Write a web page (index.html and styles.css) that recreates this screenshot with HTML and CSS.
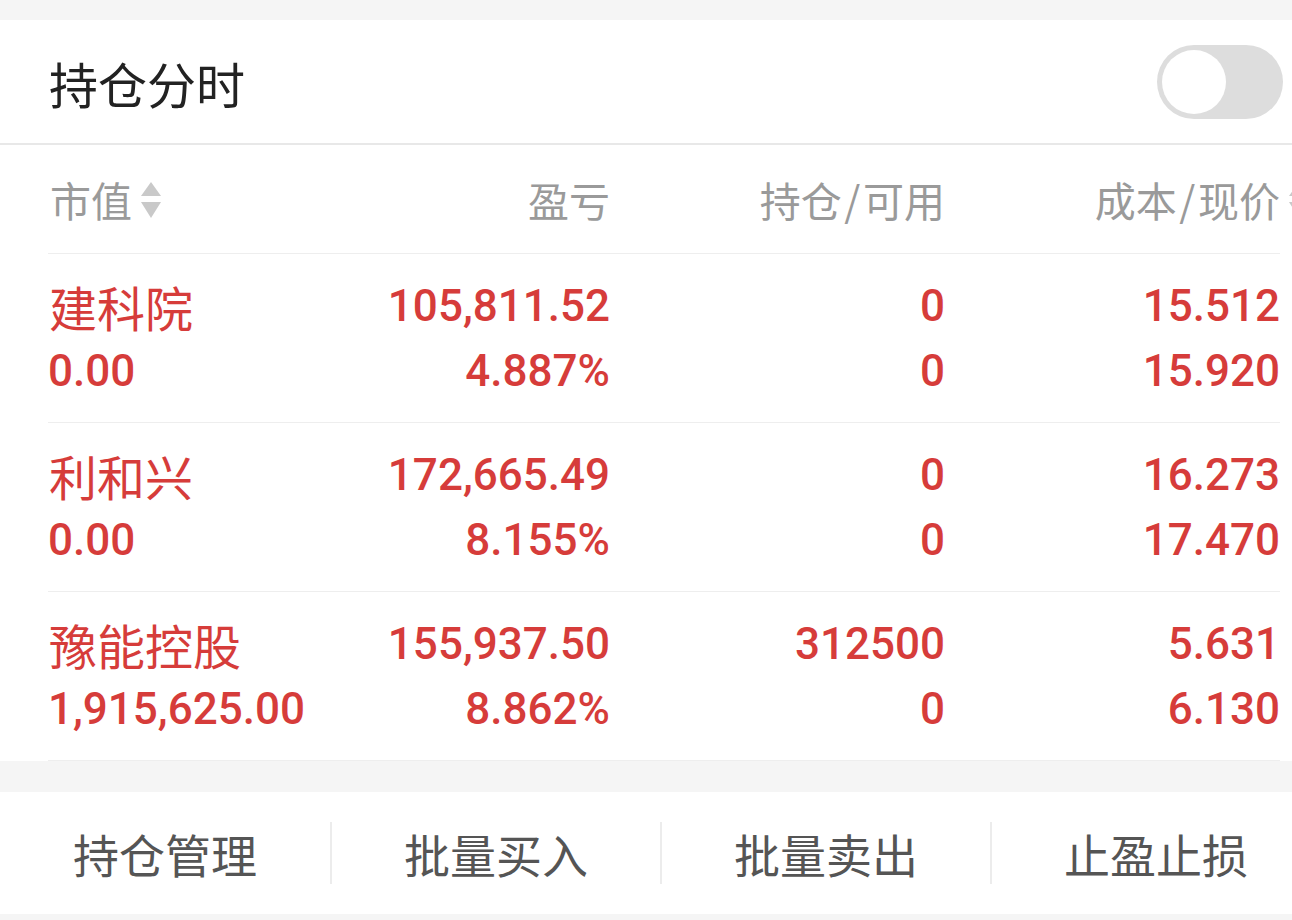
FILE: index.html
```html
<!DOCTYPE html>
<html lang="zh-CN">
<head>
    <meta charset="UTF-8">
    <meta name="viewport" content="width=device-width, initial-scale=1.0">
    <title>持仓分时</title>
    <link rel="stylesheet" href="styles.css">
</head>
<body>
    <div class="page">
        <div class="top-gap"></div>

        <div class="panel-header">
            <div class="panel-title">持仓分时</div>
            <div class="switch"><span class="knob"></span></div>
        </div>

        <div class="positions">
            <div class="row head">
                <div class="cell left">市值<svg class="sort" viewBox="0 0 22 40"><path d="M11 2 L21 16 L1 16 Z"/><path d="M1 22 L21 22 L11 38 Z"/></svg></div>
                <div class="cell">盈亏</div>
                <div class="cell">持仓&#8202;/&#8202;可用</div>
                <div class="cell">成本&#8202;/&#8202;现价<svg class="sort out" viewBox="0 0 22 40"><path d="M11 2 L21 16 L1 16 Z"/><path d="M1 22 L21 22 L11 38 Z"/></svg></div>
            </div>

            <div class="row">
                <div class="cell left"><div class="name">建科院</div><div class="num">0.00</div></div>
                <div class="cell"><div class="num">105,811.52</div><div class="num">4.887%</div></div>
                <div class="cell"><div class="num">0</div><div class="num">0</div></div>
                <div class="cell"><div class="num">15.512</div><div class="num">15.920</div></div>
            </div>

            <div class="row">
                <div class="cell left"><div class="name">利和兴</div><div class="num">0.00</div></div>
                <div class="cell"><div class="num">172,665.49</div><div class="num">8.155%</div></div>
                <div class="cell"><div class="num">0</div><div class="num">0</div></div>
                <div class="cell"><div class="num">16.273</div><div class="num">17.470</div></div>
            </div>

            <div class="row">
                <div class="cell left"><div class="name">豫能控股</div><div class="num">1,915,625.00</div></div>
                <div class="cell"><div class="num">155,937.50</div><div class="num">8.862%</div></div>
                <div class="cell"><div class="num">312500</div><div class="num">0</div></div>
                <div class="cell"><div class="num">5.631</div><div class="num">6.130</div></div>
            </div>
        </div>

        <div class="band"></div>

        <div class="actions">
            <div class="action">持仓管理</div>
            <div class="action">批量买入</div>
            <div class="action">批量卖出</div>
            <div class="action">止盈止损</div>
        </div>

        <div class="bottom-gap"></div>
    </div>
</body>
</html>
```

FILE: styles.css
```css
html, body {
    margin: 0;
    padding: 0;
    background: #f5f5f5;
}

body {
    font-family: "Noto Sans CJK SC", "Noto Sans", sans-serif;
    overflow: hidden;
}

.page {
    width: 1292px;
    height: 920px;
    overflow: hidden;
    background: #f5f5f5;
}

.top-gap {
    height: 20px;
}

.panel-header {
    height: 123px;
    background: #fff;
    border-bottom: 2px solid #e8e8e8;
    display: flex;
    align-items: center;
    justify-content: space-between;
    padding: 0 9px 0 49px;
}

.panel-title {
    font-size: 49px;
    color: #222;
    line-height: 1;
    margin-top: 2px;
}

.switch {
    width: 126px;
    height: 74px;
    border-radius: 37px;
    background: #dddddd;
    display: flex;
    align-items: center;
    padding-left: 5px;
    box-sizing: border-box;
}

.switch .knob {
    width: 64px;
    height: 64px;
    border-radius: 50%;
    background: #fff;
}

.positions {
    background: #fff;
    padding: 0 12px 0 48px;
}

.row {
    display: grid;
    grid-template-columns: 282px 280px 335px 335px;
    border-bottom: 1px solid #eeeeee;
    height: 169px;
    box-sizing: border-box;
    padding-top: 20px;
}

.row.head {
    height: 109px;
    padding-top: 0;
    align-items: center;
}

.cell {
    text-align: right;
    color: #d63c3a;
}

.cell.left {
    text-align: left;
}

.row.head .cell {
    font-size: 41px;
    color: #9a9a9a;
    line-height: 1;
    display: flex;
    align-items: center;
    justify-content: flex-end;
    white-space: nowrap;
    margin-top: 1px;
}

.row.head .cell.left {
    justify-content: flex-start;
    padding-left: 2px;
}

.sort {
    width: 22px;
    height: 40px;
    fill: #c9c9c9;
    margin-left: 8px;
    flex-shrink: 0;
}

.sort.out {
    margin-right: -30px;
}

.name {
    font-size: 48px;
    line-height: 65px;
    padding-left: 1px;
}

.num {
    font-family: Roboto, "Liberation Sans", sans-serif;
    font-weight: 500;
    font-size: 44px;
    line-height: 65px;
    white-space: nowrap;
}

.band {
    height: 31px;
    background: #f5f5f5;
}

.actions {
    display: flex;
    width: 1320px;
    height: 122px;
    background: #fff;
    align-items: center;
}

.action {
    width: 330px;
    flex-shrink: 0;
    text-align: center;
    font-size: 46px;
    color: #555;
    line-height: 62px;
    border-left: 2px solid #ececec;
    box-sizing: border-box;
}

.action:first-child {
    border-left: none;
}

.bottom-gap {
    height: 5px;
}
```
